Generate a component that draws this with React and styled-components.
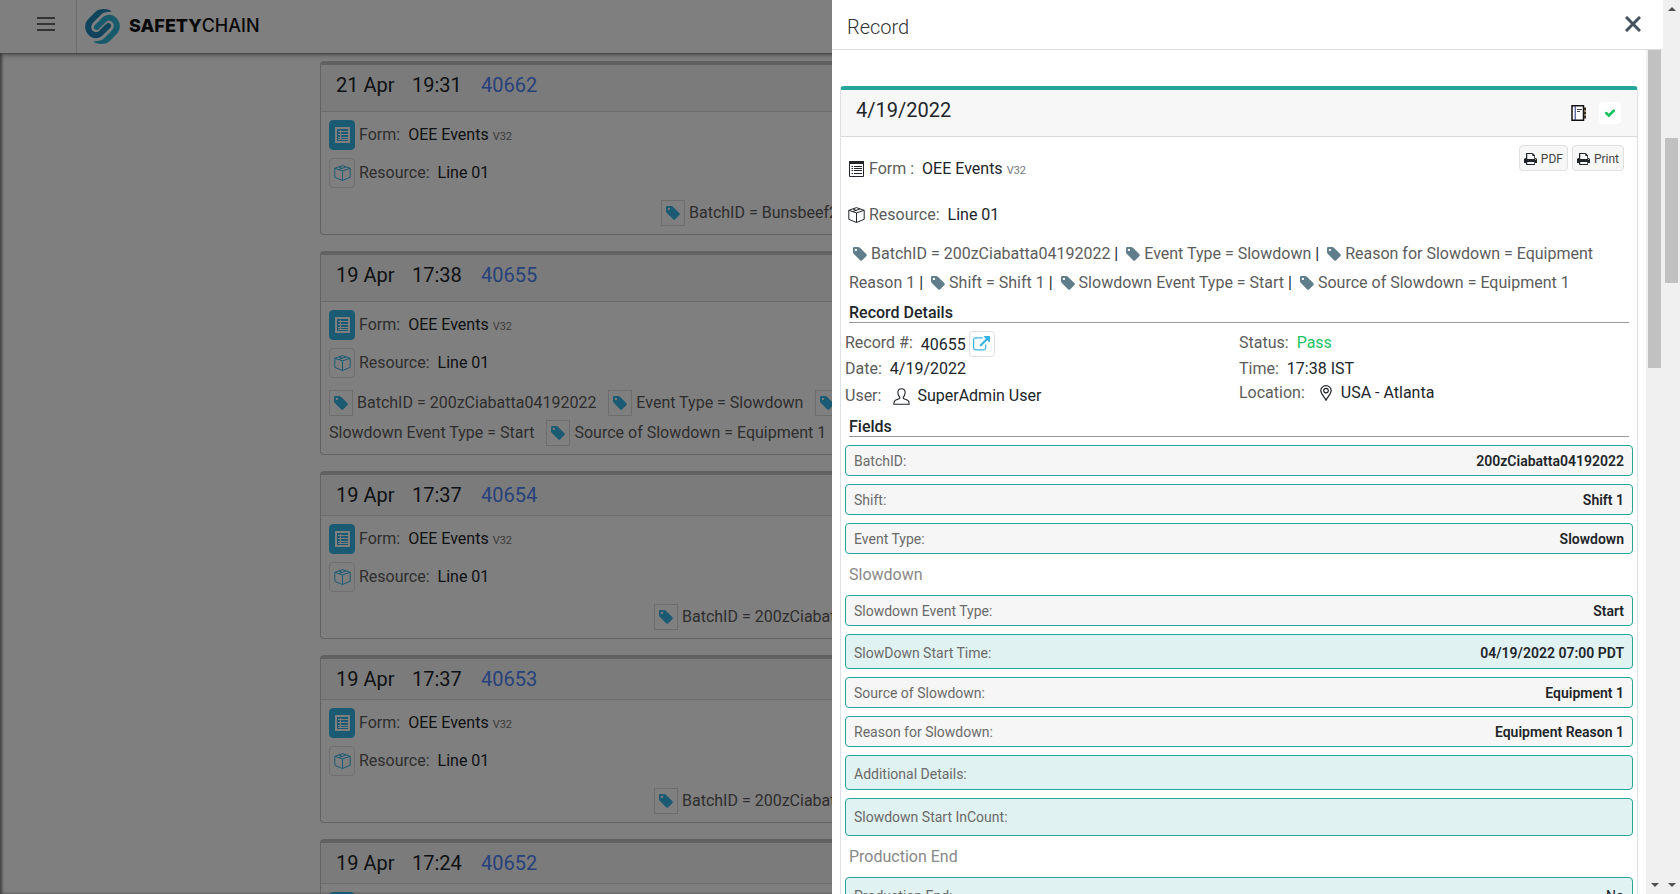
import React from "react";
import styled, { createGlobalStyle } from "styled-components";

const GlobalStyle = createGlobalStyle`
  *, *::before, *::after { box-sizing: border-box; }
  body {
    margin: 0;
    background: #fff;
    color: #212529;
    font: 400 16px/24px Roboto, "Liberation Sans", sans-serif;
    overflow: hidden;
  }
  h1, h2, h3, h4, p, dl, dd { margin: 0; font-weight: 400; }
  button { font: inherit; color: inherit; padding: 0; margin: 0; cursor: pointer; }
  a { color: inherit; text-decoration: none; }
  svg { display: block; flex: none; }
`;

const blue = "#36b4e6";
const teal = "#26a69a";

/* ---------- icons ---------- */

const TagGlyph = () => (
  <svg width="14" height="14" viewBox="0 128 1536 1536" fill="currentColor" aria-hidden="true">
    <path d="M448 448q0-53-37.500-90.500t-90.500-37.500-90.500 37.500-37.500 90.500 37.500 90.500 90.500 37.500 90.500-37.500 37.500-90.500zM1515 1024q0 53-37 90l-491 492q-39 37-91 37-53 0-90-37l-715-716q-38-37-64.500-101t-26.500-117v-416q0-52 38-90t90-38h416q53 0 117 26.500t102 64.500l715 714q37 39 37 91z" />
  </svg>
);

const PrintGlyph = () => (
  <svg width="13" height="14" viewBox="0 0 1664 1792" fill="#212529" aria-hidden="true">
    <path d="M416 1536h896v-256h-896v256zM416 896h896v-384h-160q-40 0-68-28t-28-68v-160h-640v640zM1536 960q0-26-19-45t-45-19-45 19-19 45 19 45 45 19 45-19 19-45zM1664 960v416q0 13-9.500 22.500t-22.500 9.500h-224v160q0 40-28 68t-68 28h-960q-40 0-68-28t-28-68v-160h-224q-13 0-22.500-9.500t-9.500-22.500v-416q0-79 56.500-135.500t135.500-56.500h64v-544q0-40 28-68t68-28h672q40 0 88 20t76 48l152 152q28 28 48 76t20 88v256h64q79 0 135.500 56.500t56.500 135.500z" />
  </svg>
);

const ExternalGlyph = () => (
  <svg width="17" height="17" viewBox="0 0 1792 1792" fill={blue} aria-hidden="true">
    <path d="M1408 928v320q0 119-84.500 203.500t-203.500 84.500h-832q-119 0-203.500-84.500t-84.500-203.500v-832q0-119 84.500-203.500t203.500-84.500h704q14 0 23 9t9 23v64q0 14-9 23t-23 9h-704q-66 0-113 47t-47 113v832q0 66 47 113t113 47h832q66 0 113-47t47-113v-320q0-14 9-23t23-9h64q14 0 23 9t9 23zM1792 64v512q0 26-19 45t-45 19-45-19l-176-176-652 652q-10 10-23 10t-23-10l-114-114q-10-10-10-23t10-23l652-652-176-176q-19-19-19-45t19-45 45-19h512q26 0 45 19t19 45z" />
  </svg>
);

const CheckGlyph = () => (
  <svg width="12" height="12" viewBox="0 0 1792 1792" fill="#0bc35a" aria-hidden="true">
    <path d="M1671 566q0 40-28 68l-724 724-136 136q-28 28-68 28t-68-28l-136-136-362-362q-28-28-28-68t28-68l136-136q28-28 68-28t68 28l294 295 656-657q28-28 68-28t68 28l136 136q28 28 28 68z" />
  </svg>
);

const ListGlyph = () => (
  <svg width="15" height="16" viewBox="0 0 15 16" fill="none" stroke="currentColor" aria-hidden="true">
    <path d="M.5 .5H14.500V15.500H.5Z" />
    <path d="M0 1.500H15" strokeWidth="3" />
    <path d="M5 5.500H13M5 7.500H13M5 9.500H13M5 12.500H13" />
    <path d="M2.500 5.500H4M2.500 7.500H4M2.500 9.500H4M2.500 12.500H4" />
  </svg>
);

const SheetGlyph = () => (
  <svg width="15" height="16" viewBox="0 0 15 16" fill="none" stroke="currentColor" aria-hidden="true">
    <path d="M1 1H14V15H1Z" strokeWidth="2" />
    <path d="M3 4.500H13M3 7.500H13M3 10.500H13M3 12.500H13M5.500 3V13" />
  </svg>
);

const BoxGlyph = () => (
  <svg width="17" height="16" viewBox="0 0 17 16" fill="none" stroke="currentColor" strokeLinejoin="round" aria-hidden="true">
    <path d="M8.500 .6L16.200 3.300V12.300L8.500 15.500L.8 12.300V3.300Z" />
    <path d="M.8 3.300L8.500 5.900L16.200 3.300M8.500 5.900V15.500M4.600 4.600L12 1.900M5 2L8.500 3.500" />
  </svg>
);

const NotebookGlyph = () => (
  <svg width="16" height="16" viewBox="0 0 16 16" fill="none" stroke="#111" aria-hidden="true">
    <path d="M1 .8H12.500V15.200H1Z" strokeWidth="1.500" fill="#fff" />
    <path d="M4.200 1V15" stroke="#1b2a7a" />
    <path d="M6 4.500H11M6 6.500H9" stroke="#444" />
    <path d="M14 2.500V5.500M14 6.500V9.500M14 10.500V13.500" strokeWidth="2" stroke="#3a2c1c" />
  </svg>
);

const CloseGlyph = () => (
  <svg width="16" height="16" viewBox="0 0 16 16" stroke="#43525f" strokeWidth="3" aria-hidden="true">
    <path d="M1 1L15 15M15 1L1 15" />
  </svg>
);

const UserGlyph = () => (
  <svg width="20" height="17" viewBox="0 0 20 17" fill="none" stroke="#212529" strokeWidth="1.100" strokeLinejoin="round" aria-hidden="true">
    <path d="M8.500 .8C6 .8 4.700 2.500 4.900 4.900C5 6.700 5.700 8.200 6.700 9.100V10.600L2.400 12.300C1.300 12.800 .8 13.900 .8 16.200H16.200C16.200 13.900 15.700 12.800 14.600 12.300L10.300 10.600V9.100C11.300 8.200 12 6.700 12.100 4.900C12.300 2.500 11 .8 8.500 .8Z" />
  </svg>
);

const PinGlyph = () => (
  <svg width="14" height="16" viewBox="0 0 14 16" fill="none" stroke="#212529" strokeWidth="1.200" aria-hidden="true">
    <path d="M6 15.200C4.500 12 .8 9 .8 5.600A5.200 5 0 0 1 11.200 5.600C11.200 9 7.500 12 6 15.200Z" />
    <circle cx="6" cy="5.600" r="2.300" />
  </svg>
);

const LogoMark = () => (
  <svg width="35" height="35" viewBox="0 0 35 35" aria-hidden="true">
    <path
      fill="#2189b8"
      d="M18.500 0C23 0 25.500 1 26.500 2.800C22 2.600 18.500 3.200 16 5.700L8.500 13.200C5.500 16.500 5.800 20 8 22C10 23.800 12.800 23.300 14.500 21.600L21 15C22.500 13.500 24.500 13.700 25.500 14.900C26.600 16.200 26.300 17.800 25.200 18.900L17.500 26.500C13.500 30.300 7.500 30 3.800 26.200C-.8 21.600-1.200 14.600 3.300 10L10 3.300C12.300 1.100 15 0 18.500 0Z"
    />
    <path
      fill="#2fb5d6"
      d="M16.500 35C12 35 9.500 34 8.500 32.200C13 32.400 16.500 31.800 19 29.300L26.500 21.800C29.500 18.500 29.200 15 27 13C25 11.200 22.200 11.700 20.500 13.400L14 20C12.500 21.500 10.500 21.300 9.500 20.100C8.400 18.800 8.700 17.200 9.800 16.100L17.500 8.500C21.500 4.700 27.500 5 31.200 8.800C35.800 13.400 36.200 20.400 31.700 25L25 31.700C22.700 33.900 20 35 16.500 35Z"
    />
  </svg>
);

const MenuGlyph = () => (
  <svg width="18" height="14" viewBox="0 0 18 14" stroke="#666" strokeWidth="2" aria-hidden="true">
    <path d="M0 1H18M0 7H18M0 13H18" />
  </svg>
);

/* ---------- page shell ---------- */

const Shell = styled.div`
  display: flex;
  height: 100vh;
  overflow: hidden;
`;

const Main = styled.div`
  flex: 1;
  min-width: 0;
  display: flex;
  flex-direction: column;
  overflow: hidden;
`;

const Scrim = styled.div`
  position: fixed;
  inset: 0 17px 0 0;
  background: rgba(0, 0, 0, 0.5);
`;

const TopBar = styled.header`
  position: relative;
  flex: none;
  display: flex;
  align-items: center;
  height: 53px;
  background: #fff;
  box-shadow: 0 1px 6px rgba(0, 0, 0, 0.5);
`;

const MenuButton = styled.button`
  display: flex;
  align-items: center;
  justify-content: flex-end;
  width: 77px;
  height: 53px;
  padding: 0 21px 5px 0;
  border: 0;
  border-right: 1px solid #dcdcdc;
  background: none;
`;

const Brand = styled.a`
  display: flex;
  align-items: center;
  gap: 9px;
  padding: 0 0 1px 8px;
  font: 500 18px/24px Inter, sans-serif;
  color: #111;

  b { font-weight: 800; }
`;

const RecordList = styled.main`
  flex: 1;
  min-height: 0;
  overflow: hidden;
  display: flex;
  flex-direction: column;
  gap: 16px;
  padding: 8px 320px 0;
  box-shadow: inset 2px 0 3px rgba(0, 0, 0, 0.5);
`;

/* ---------- record cards ---------- */

const Card = styled.article`
  flex: none;
  border: 1px solid #c4c4c4;
  border-top: 4px solid #c4c4c4;
  border-radius: 4px;
`;

const CardHead = styled.header`
  display: flex;
  align-items: flex-start;
  height: ${(p) => (p.$tall ? 47 : 41)}px;
  padding: 8px 15px;
  background: #f7f7f7;
  border-bottom: 1px solid #d9d9d9;
  font-size: 20px;
`;

const CardDate = styled.span`
  width: 76px;
`;

const CardTime = styled.span`
  width: 69px;
`;

const CardLink = styled.a`
  color: #4f84f6;
`;

const CardBody = styled.div`
  display: flex;
  flex-direction: column;
  gap: 8px;
  padding: 8px 8px 6px;
`;

const InfoRow = styled.div`
  display: flex;
  align-items: center;
  height: 30px;
  line-height: 26px;
`;

const IconTile = styled.span`
  display: flex;
  align-items: center;
  justify-content: center;
  width: 26px;
  height: 30px;
  margin-right: 4px;
  border-radius: 4px;
  border: 1px solid ${(p) => (p.$filled ? blue : "#dfdfdf")};
  background: ${(p) => (p.$filled ? blue : "#fff")};
  color: ${(p) => (p.$filled ? "#fff" : blue)};
`;

const Label = styled.span`
  margin-right: 8px;
  color: #5c5c5c;
`;

const Version = styled.small`
  margin: 4px 0 0 4px;
  font-size: 11px;
  color: #777;
`;

const TagRow = styled.p`
  padding: 2px 0 0 ${(p) => p.$indent}px;
  line-height: 30px;
  white-space: nowrap;
  overflow: hidden;
  color: #5c5c5c;
`;

const TagBox = styled.span`
  display: inline-flex;
  align-items: center;
  justify-content: center;
  vertical-align: middle;
  width: 24px;
  height: 26px;
  margin: 0 4px 2px ${(p) => (p.$first ? 0 : 8)}px;
  border: 1px solid #dcdcdc;
  color: ${blue};
`;

/* ---------- drawer ---------- */

const Drawer = styled.aside`
  position: fixed;
  top: 0;
  right: 17px;
  bottom: 0;
  width: calc(50% - 9px);
  display: flex;
  flex-direction: column;
  background: #fff;
`;

const DrawerHead = styled.header`
  flex: none;
  display: flex;
  align-items: center;
  justify-content: space-between;
  height: 50px;
  padding: 4px 20px 0 15px;
  border-bottom: 1px solid #dedede;
`;

const DrawerTitle = styled.h1`
  font-size: 20px;
  font-weight: 300;
  line-height: 24px;
  color: #333;
`;

const CloseButton = styled.button`
  display: flex;
  padding: 2px;
  margin-bottom: 6px;
  border: 0;
  background: none;
`;

const DrawerBody = styled.div`
  flex: 1;
  min-height: 0;
  display: flex;
`;

const DrawerContent = styled.div`
  flex: 1;
  min-width: 0;
  overflow: hidden;
  padding: 36px 8px 0;
`;

const RecordCard = styled.section`
  border: 1px solid #dee0e4;
  border-top: 4px solid ${teal};
  border-radius: 4px 4px 0 0;
`;

const RecordHead = styled.header`
  display: flex;
  align-items: center;
  gap: 12px;
  height: 47px;
  padding: 0 16px 0 15px;
  background: #f7f7f7;
  border-bottom: 1px solid #d9d9d9;
`;

const RecordDate = styled.h2`
  flex: 1;
  padding-bottom: 6px;
  font-size: 20px;
  line-height: 24px;
`;

const StatusTile = styled.span`
  display: flex;
  align-items: center;
  justify-content: center;
  width: 22px;
  height: 22px;
  border-radius: 4px;
  background: #fff;
`;

const RecordTop = styled.div`
  display: flex;
  align-items: flex-start;
  justify-content: space-between;
  padding: 8px 13px 0 7px;
`;

const Sources = styled.div`
  padding-top: 1px;
`;

const SourceRow = styled.div`
  display: flex;
  align-items: center;
  height: 46px;
`;

const SourceIcon = styled.span`
  display: flex;
  justify-content: center;
  width: 17px;
  margin-right: 4px;
`;

const ActionGroup = styled.div`
  display: flex;
  gap: 4px;
`;

const ActionButton = styled.button`
  display: flex;
  align-items: center;
  gap: 4px;
  height: 26px;
  padding: 1px 4px 0;
  border: 1px solid #dfe0e4;
  border-radius: 4px;
  background: #f7f7f7;
  font-size: 12px;
  color: #444;
`;

const RecordTags = styled.p`
  margin-top: 1px;
  padding: 0 8px;
  line-height: 29px;
  color: #5c5c5c;
`;

const InlineTag = styled.span`
  display: inline-block;
  vertical-align: middle;
  margin: 0 4px 2px;
  color: #607d8b;
`;

const Divider = styled.span`
  color: #212529;
`;

const SectionTitle = styled.h3`
  margin: ${(p) => p.$gap}px 8px 8px;
  padding-top: 2px;
  border-bottom: 1px solid #999;
  font-size: 16px;
  font-weight: 500;
  line-height: 18px;
`;

const Details = styled.div`
  display: grid;
  grid-template-columns: 1fr 1fr;
  padding: 0 4px;
`;

const DetailRow = styled.div`
  display: flex;
  align-items: ${(p) => (p.$centered ? "center" : "flex-start")};
  height: ${(p) => p.$height}px;
  gap: ${(p) => p.$gap || 0}px;
`;

const RecordNumber = styled.span`
  line-height: 28px;
`;

const OpenButton = styled.button`
  display: flex;
  align-items: center;
  justify-content: center;
  width: 26px;
  height: 26px;
  margin-left: 3px;
  border: 1px solid #dfe0e8;
  border-radius: 4px;
  background: #fff;
`;

const Pass = styled.span`
  color: #1bc25f;
`;

const FieldGroup = styled.dl`
  display: flex;
  flex-direction: column;
  gap: 8px;
  padding: 0 4px;
`;

const fieldHeights = { short: 31, medium: 35, large: 38 };

const Field = styled.div`
  display: flex;
  align-items: center;
  justify-content: space-between;
  height: ${(p) => fieldHeights[p.$size]}px;
  padding: ${(p) => (p.$size === "medium" ? 2 : 0)}px 8px 0;
  border: 1px solid ${teal};
  border-radius: 4px;
  background: ${(p) => (p.$size === "short" ? "#f6f6f6" : "#e0f2f1")};
  font-size: 14px;
  line-height: 20px;

  dt { color: #6a6a6a; }
  dd { font-weight: ${(p) => (p.$light ? 400 : 600)}; }
`;

const GroupTitle = styled.h4`
  padding: 9px 8px 8px;
  color: #888;
  line-height: 24px;
`;

/* ---------- scrollbars ---------- */

const ScrollTrack = styled.div`
  flex: none;
  display: flex;
  flex-direction: column;
  align-items: center;
  width: 17px;
  background: #f0f0f0;
`;

const ScrollSpace = styled.div`
  flex: ${(p) => p.$share} 1 0;
`;

const ScrollThumb = styled.div`
  flex: ${(p) => p.$share} 1 0;
  width: 13px;
  background: #c1c1c1;
`;

const ScrollArrow = styled.span`
  width: 0;
  margin: 7px 0;
  border: solid transparent;
  border-width: ${(p) => (p.$up ? "0 4px 4px" : "4px 4px 0")};
  border-${(p) => (p.$up ? "bottom" : "top")}-color: #505050;
`;

/* ---------- data ---------- */

const batch = "BatchID = 200zCiabatta04192022";

const records = [
  { id: "40662", date: "21 Apr", time: "19:31", tall: true, indent: 332, lines: [["BatchID = Bunsbeef2"]] },
  {
    id: "40655",
    date: "19 Apr",
    time: "17:38",
    tall: true,
    indent: 0,
    lines: [
      [batch, "Event Type = Slowdown", "Reason for Slowdown"],
      [null, "Source of Slowdown = Equipment 1"],
    ],
  },
  { id: "40654", date: "19 Apr", time: "17:37", indent: 325, lines: [[batch]] },
  { id: "40653", date: "19 Apr", time: "17:37", indent: 325, lines: [[batch]] },
  { id: "40652", date: "19 Apr", time: "17:24", indent: 325, lines: [[batch]] },
];

const recordTags = [
  batch,
  "Event Type = Slowdown",
  "Reason for Slowdown = Equipment Reason 1",
  "Shift = Shift 1",
  "Slowdown Event Type = Start",
  "Source of Slowdown = Equipment 1",
];

const fieldGroups = [
  {
    fields: [
      ["BatchID:", "200zCiabatta04192022", "short"],
      ["Shift:", "Shift 1", "short"],
      ["Event Type:", "Slowdown", "short"],
    ],
  },
  {
    title: "Slowdown",
    fields: [
      ["Slowdown Event Type:", "Start", "short"],
      ["SlowDown Start Time:", "04/19/2022 07:00 PDT", "medium"],
      ["Source of Slowdown:", "Equipment 1", "short"],
      ["Reason for Slowdown:", "Equipment Reason 1", "short"],
      ["Additional Details:", "", "medium"],
      ["Slowdown Start InCount:", "", "large"],
    ],
  },
  { title: "Production End", fields: [["Production End:", "No", "medium", true]] },
];

function RecordSummary({ record }) {
  return (
    <Card>
      <CardHead $tall={record.tall}>
        <CardDate>{record.date}</CardDate>
        <CardTime>{record.time}</CardTime>
        <CardLink href={`#${record.id}`}>{record.id}</CardLink>
      </CardHead>
      <CardBody>
        <InfoRow>
          <IconTile $filled><SheetGlyph /></IconTile>
          <Label>Form:</Label>OEE Events<Version>V32</Version>
        </InfoRow>
        <InfoRow>
          <IconTile><BoxGlyph /></IconTile>
          <Label>Resource:</Label>Line 01
        </InfoRow>
        <TagRow $indent={record.indent}>
          {record.lines.map((line, i) => (
            <React.Fragment key={i}>
              {i > 0 && <br />}
              {line.map((tag, j) =>
                tag === null ? (
                  <React.Fragment key={j}>Slowdown Event Type = Start </React.Fragment>
                ) : (
                  <React.Fragment key={j}>
                    <TagBox $first={j === 0}><TagGlyph /></TagBox>
                    {tag}{" "}
                  </React.Fragment>
                )
              )}
            </React.Fragment>
          ))}
        </TagRow>
      </CardBody>
    </Card>
  );
}

export default function App() {
  return (
    <>
      <GlobalStyle />
      <Shell>
        <Main>
          <TopBar>
            <MenuButton aria-label="Menu"><MenuGlyph /></MenuButton>
            <Brand href="#home">
              <LogoMark />
              <span><b>SAFETY</b>CHAIN</span>
            </Brand>
          </TopBar>
          <RecordList>
            {records.map((r) => <RecordSummary key={r.id} record={r} />)}
          </RecordList>
        </Main>
        <ScrollTrack>
          <ScrollArrow $up />
          <ScrollSpace $share={120} />
          <ScrollThumb $share={145} />
          <ScrollSpace $share={593} />
          <ScrollArrow />
        </ScrollTrack>
      </Shell>
      <Scrim />
      <Drawer aria-label="Record">
        <DrawerHead>
          <DrawerTitle>Record</DrawerTitle>
          <CloseButton aria-label="Close"><CloseGlyph /></CloseButton>
        </DrawerHead>
        <DrawerBody>
          <DrawerContent>
            <RecordCard>
              <RecordHead>
                <RecordDate>4/19/2022</RecordDate>
                <NotebookGlyph />
                <StatusTile><CheckGlyph /></StatusTile>
              </RecordHead>
              <RecordTop>
                <Sources>
                  <SourceRow>
                    <SourceIcon><ListGlyph /></SourceIcon>
                    <Label>Form :</Label>OEE Events<Version>V32</Version>
                  </SourceRow>
                  <SourceRow>
                    <SourceIcon><BoxGlyph /></SourceIcon>
                    <Label>Resource:</Label>Line 01
                  </SourceRow>
                </Sources>
                <ActionGroup>
                  <ActionButton><PrintGlyph />PDF</ActionButton>
                  <ActionButton><PrintGlyph />Print</ActionButton>
                </ActionGroup>
              </RecordTop>
              <RecordTags>
                {recordTags.map((tag, i) => (
                  <React.Fragment key={tag}>
                    <InlineTag><TagGlyph /></InlineTag>
                    {tag}
                    {i < recordTags.length - 1 && <Divider> | </Divider>}
                  </React.Fragment>
                ))}
              </RecordTags>
              <SectionTitle $gap={5}>Record Details</SectionTitle>
              <Details>
                <div>
                  <DetailRow $height={26}>
                    <Label>Record #:</Label><RecordNumber>40655</RecordNumber>
                    <OpenButton aria-label="Open record"><ExternalGlyph /></OpenButton>
                  </DetailRow>
                  <DetailRow $height={23} $centered><Label>Date:</Label>4/19/2022</DetailRow>
                  <DetailRow $height={32} $centered $gap={4}>
                    <Label>User:</Label><UserGlyph />SuperAdmin User
                  </DetailRow>
                </div>
                <div>
                  <DetailRow $height={26}><Label>Status:</Label><Pass>Pass</Pass></DetailRow>
                  <DetailRow $height={23} $centered><Label>Time:</Label>17:38 IST</DetailRow>
                  <DetailRow $height={26} $centered $gap={7}>
                    <Label>Location:</Label><PinGlyph />USA - Atlanta
                  </DetailRow>
                </div>
              </Details>
              <SectionTitle $gap={4}>Fields</SectionTitle>
              {fieldGroups.map((group, i) => (
                <React.Fragment key={i}>
                  {group.title && <GroupTitle>{group.title}</GroupTitle>}
                  <FieldGroup>
                    {group.fields.map(([label, value, size, light]) => (
                      <Field key={label} $size={size} $light={light}>
                        <dt>{label}</dt>
                        <dd>{value}</dd>
                      </Field>
                    ))}
                  </FieldGroup>
                </React.Fragment>
              ))}
            </RecordCard>
          </DrawerContent>
          <ScrollTrack>
            <ScrollThumb $share={318} />
            <ScrollSpace $share={508} />
            <ScrollArrow />
          </ScrollTrack>
        </DrawerBody>
      </Drawer>
    </>
  );
}
